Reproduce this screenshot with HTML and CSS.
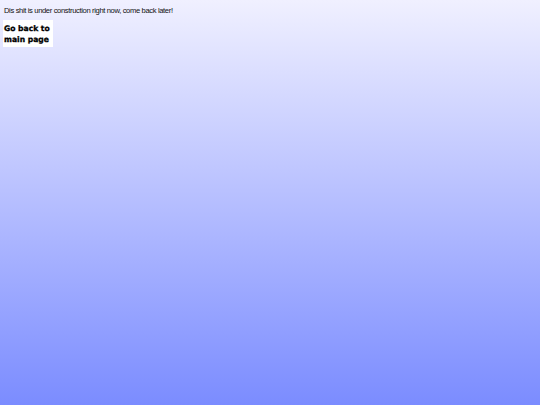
FILE: index.html
```html
<!DOCTYPE html>
<html>
<head>
<meta charset="utf-8">
<link rel="stylesheet" href="styles.css">
</head>
<body>
<p class="notice">Dis shit is under construction right now, come back later!</p>
<a class="back-btn" href="#">Go back to<br>main page</a>
</body>
</html>
```
FILE: styles.css
```css
html {
  min-height: 100%;
  background: linear-gradient(to bottom, #f0f0ff 0%, #7b8cff 100%);
}

body {
  margin: 4px 3px;
  font-family: "Liberation Sans", Arial, sans-serif;
  color: #000;
}

.notice {
  margin: 1px 1px 0;
  font-size: 7.6px;
  line-height: 12px;
  letter-spacing: -0.36px;
  color: #111;
}

.back-btn {
  display: inline-block;
  margin-top: 3px;
  padding: 3px 3px 2px 1px;
  background: #fff;
  color: #000;
  text-decoration: none;
  font-family: "DejaVu Sans", Verdana, sans-serif;
  font-weight: bold;
  font-size: 7.6px;
  line-height: 11px;
  -webkit-text-stroke: 0.3px #000;
}
```
